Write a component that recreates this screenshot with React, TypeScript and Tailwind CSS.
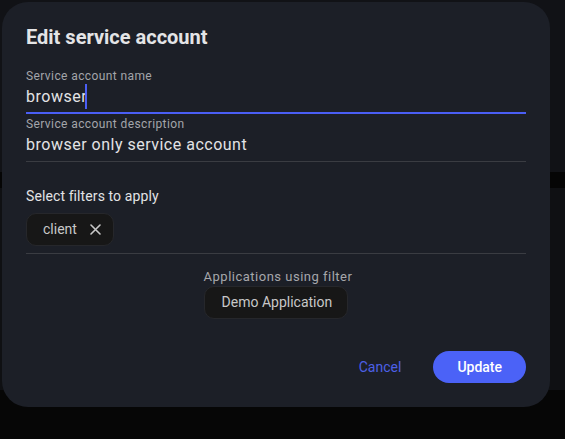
export default function App() {
  return (
    <div
      className="relative h-[439px] w-[565px] overflow-hidden bg-[#060606]"
      style={{ fontFamily: "Roboto, 'Liberation Sans', sans-serif" }}
    >
      {/* page behind the modal */}
      <div className="flex flex-col">
        <div className="h-[172px] bg-[#111216]" />
        <div className="h-[16px] bg-[#050505]" />
        <div className="h-[202px] bg-[#0f1013]" />
      </div>

      <div className="absolute left-[2px] top-[2px] flex w-[548px] flex-col rounded-[26px] bg-[#1c1f27] px-6 pb-6 pt-[19px]">
        <h2 className="text-[20px] font-bold leading-8 text-[#e4e4e6]">Edit service account</h2>

        <div className="mt-[15px] flex flex-col">
          <label className="text-[12px] leading-4 tracking-[0.4px] text-[#a3a5aa]">Service account name</label>
          <div className="flex items-center border-b-2 border-[#4a5ef5] pb-[3px] text-[16px] leading-6 tracking-[0.5px] text-[#e3e3e5]">
            <span>browser</span>
            <span className="-ml-[2px] inline-block h-[25px] w-[2px] bg-[#4a5ef5]" />
          </div>
        </div>

        <div className="mt-[2px] flex flex-col">
          <label className="text-[12px] leading-4 tracking-[0.4px] text-[#a3a5aa]">Service account description</label>
          <div className="border-b border-[#3a3c42] pb-[4px] pt-[1px] text-[16px] leading-6 tracking-[0.5px] text-[#e3e3e5]">
            browser only service account
          </div>
        </div>

        <div className="mt-[24px] text-[14px] leading-5 tracking-[0.1px] text-[#e2e3e5]">Select filters to apply</div>

        <div className="mt-[7px] flex border-b border-[#3a3c42] pb-[7px]">
          <div className="flex h-[33px] items-center gap-[13px] rounded-[10px] border border-[#26272b] bg-[#171717] pl-[16px] pr-[12px] text-[14px] text-[#c8c8c8]">
            <span>client</span>
            <svg width="11" height="11" viewBox="0 0 11 11" fill="none" stroke="#c8c8c8" strokeWidth="1.6" strokeLinecap="round">
              <path d="M1 1L10 10M10 1L1 10" />
            </svg>
          </div>
        </div>

        <div className="mt-[15px] flex justify-center pl-[4px]">
          <div className="flex flex-col items-start">
            <div className="text-[13px] leading-4 tracking-[0.5px] text-[#a6a7ab]">Applications using filter</div>
            <div className="mt-[1px] flex h-[33px] items-center rounded-[10px] border border-[#26272b] bg-[#171717] pl-[17px] pr-[15px] text-[14px] text-[#c8c8c8]">
              Demo Application
            </div>
          </div>
        </div>

        <div className="mt-[32px] flex items-center justify-end">
          <button className="px-4 text-[14px] leading-8 text-[#4c60e6]">Cancel</button>
          <button className="ml-[16px] h-[32px] rounded-full bg-[#4b62f7] px-6 text-[14px] font-medium text-white">
            Update
          </button>
        </div>
      </div>
    </div>
  );
}
